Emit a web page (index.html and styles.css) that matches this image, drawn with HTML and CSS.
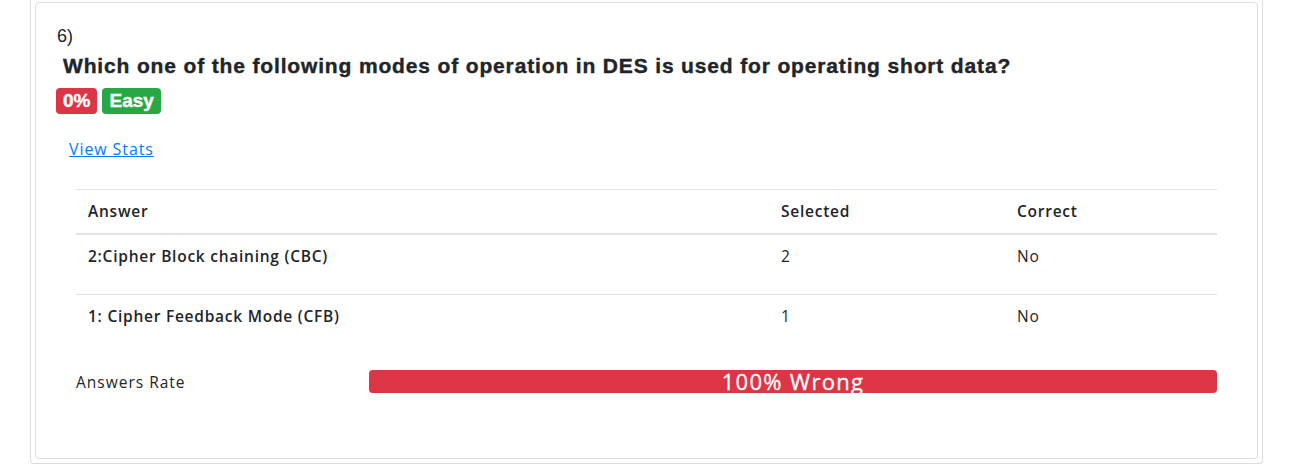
FILE: index.html
```html
<!DOCTYPE html>
<html>
<head>
<meta charset="utf-8">
<link rel="stylesheet" href="styles.css">
</head>
<body>
<div class="outer">
  <div class="card">
    <div class="qnum">6)</div>
    <div class="question">Which one of the following modes of operation in DES is used for operating short data?</div>
    <div class="badges">
      <span class="badge badge-red">0%</span>
      <span class="badge badge-green">Easy</span>
    </div>
    <div class="stats-link"><a href="#">View Stats</a></div>
    <div class="stats">
      <table class="answers">
        <thead>
          <tr><th class="c1">Answer</th><th class="c2">Selected</th><th class="c3">Correct</th></tr>
        </thead>
        <tbody>
          <tr><td class="strong">2:Cipher Block chaining (CBC)</td><td>2</td><td>No</td></tr>
          <tr><td class="strong">1: Cipher Feedback Mode (CFB)</td><td>1</td><td>No</td></tr>
        </tbody>
      </table>
      <div class="rate">
        <div class="rate-label">Answers Rate</div>
        <div class="progress"><div class="bar" style="width:100%">100% Wrong</div></div>
      </div>
    </div>
  </div>
</div>
</body>
</html>
```
FILE: styles.css
```css
html, body { margin: 0; padding: 0; background: #fff; }
body { font-family: "Open Sans", "Liberation Sans", sans-serif; color: #212529; }
.outer {
  margin-left: 30px;
  width: 1223px;
  border: 1px solid #dcdcdc;
  border-top: none;
  border-radius: 0 0 4px 4px;
  padding: 2px 4px 4px 4px;
}
.card {
  border: 1px solid #dfdfdf;
  border-radius: 4px;
  padding: 20px 20px 0 20px;
  height: 435px;
}
.qnum { font-family: "Liberation Sans", Arial, sans-serif; font-size: 18px; line-height: 27px; padding-left: 1px; }
.question {
  font-family: "Liberation Sans", Arial, sans-serif;
  font-weight: bold;
  font-size: 21px;
  line-height: 25px;
  letter-spacing: 0.85px;
  -webkit-text-stroke: 0.4px #212529;
  margin-top: 3px;
  padding-left: 7px;
}
.badges { display: flex; gap: 5px; margin-top: 10px; }
.badge {
  font-family: "Liberation Sans", Arial, sans-serif;
  font-weight: bold;
  font-size: 19px;
  line-height: 26px;
  height: 26px;
  padding: 0 7px;
  border-radius: 4px;
  color: #fff;
  -webkit-text-stroke: 0.4px #fff;
}
.badge-red { background: #dc3545; }
.badge-green { background: #28a745; }
.stats-link { margin-top: 24px; padding-left: 13px; font-size: 16px; line-height: 22px; letter-spacing: 0.9px; }
.stats-link a { color: #007bff; text-decoration: underline; }
.stats { margin: 29px 20px 0 20px; }
.answers { width: 100%; border-collapse: collapse; font-size: 15.5px; letter-spacing: 0.75px; }
.answers th, .answers td { text-align: left; vertical-align: top; border-top: 1px solid #dee2e6; line-height: 20px; }
.answers th { font-weight: 600; border-bottom: 2px solid #dee2e6; padding: 11px 12px 12px; }
.answers td { padding: 11px 12px 28px; }
.answers td.strong { font-weight: 600; }
.c1 { width: 669px; }
.c2 { width: 212px; }
.rate { display: grid; grid-template-columns: 293px 1fr; align-items: center; margin-top: 16px; font-size: 15.5px; letter-spacing: 1px; }
.progress { height: 23px; border-radius: 4px; background: #e9ecef; display: flex; }
.bar { background: #dc3545; color: #fff; font-size: 22px; font-weight: 500; letter-spacing: 1.3px; line-height: 23px; text-align: center; border-radius: 4px; white-space: nowrap; -webkit-text-stroke: 0.3px #fff; }
```
